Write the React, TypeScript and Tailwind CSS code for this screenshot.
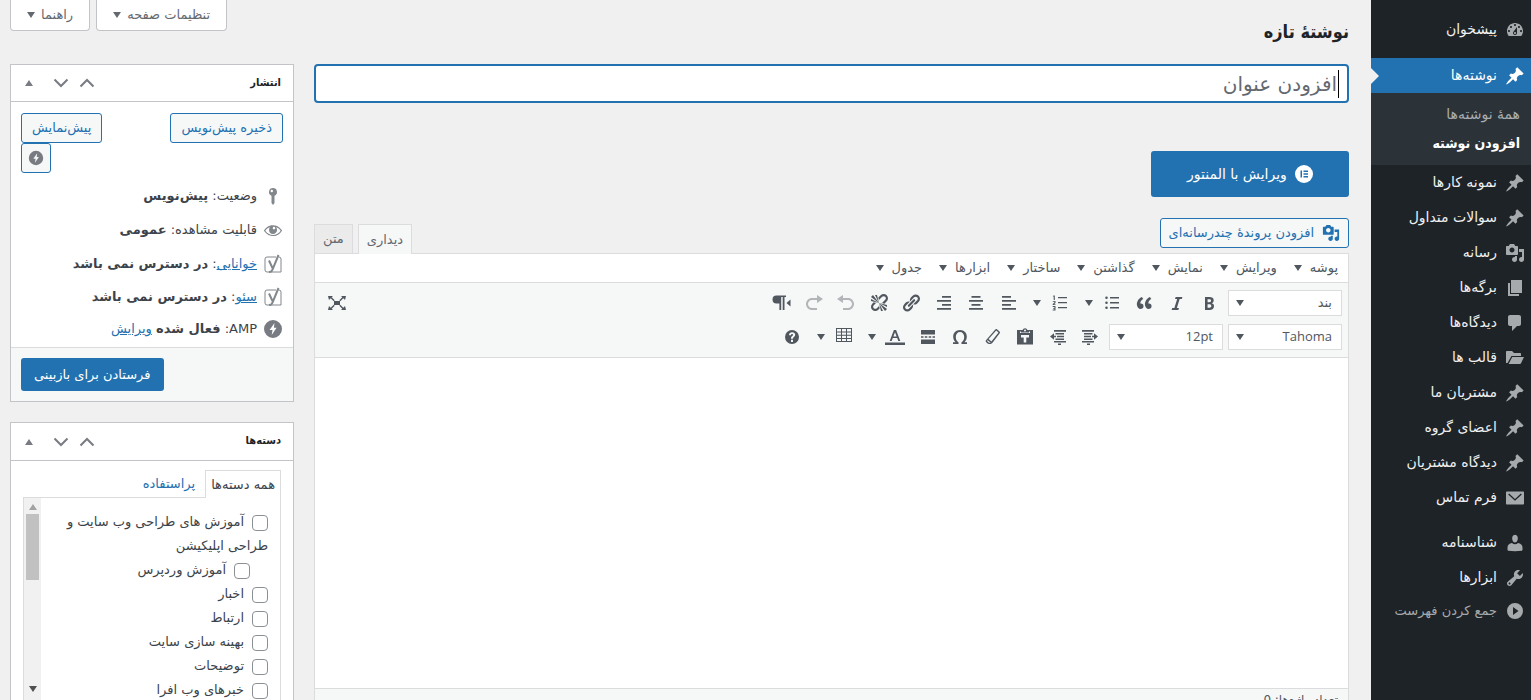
import type { ReactNode } from 'react';

const paths = {
  dashboard:
    'M3.76 16h12.48c1.1-1.37 1.76-3.11 1.76-5 0-4.42-3.58-8-8-8s-8 3.58-8 8c0 1.89.66 3.63 1.76 5zM10 4c.55 0 1 .45 1 1s-.45 1-1 1-1-.45-1-1 .45-1 1-1zM6 6c.55 0 1 .45 1 1s-.45 1-1 1-1-.45-1-1 .45-1 1-1zm8 0c.55 0 1 .45 1 1s-.45 1-1 1-1-.45-1-1 .45-1 1-1zm-5.37 5.55L12 7v6c0 1.1-.9 2-2 2s-2-.9-2-2c0-.57.24-1.08.63-1.45zM4 10c.55 0 1 .45 1 1s-.45 1-1 1-1-.45-1-1 .45-1 1-1zm12 0c.55 0 1 .45 1 1s-.45 1-1 1-1-.45-1-1 .45-1 1-1zm-5 3c0-.55-.45-1-1-1s-1 .45-1 1 .45 1 1 1 1-.45 1-1z',
  pin: 'M10.44 3.02l1.82-1.82 6.36 6.35-1.83 1.82c-1.05-.68-2.48-.57-3.41.36l-.75.75c-.92.93-1.04 2.35-.35 3.41l-1.83 1.82-2.41-2.41-2.8 2.79c-.42.42-3.38 2.71-3.8 2.29s1.86-3.39 2.28-3.81l2.79-2.79L4.1 9.36l1.83-1.82c1.05.69 2.48.57 3.4-.36l.75-.75c.93-.92 1.05-2.35.36-3.41z',
  media:
    'M13 11V4c0-.55-.45-1-1-1h-1.67L9 1H5L3.67 3H2c-.55 0-1 .45-1 1v7c0 .55.45 1 1 1h10c.55 0 1-.45 1-1zM7 4.5c1.38 0 2.5 1.12 2.5 2.5S8.38 9.5 7 9.5 4.5 8.38 4.5 7 5.62 4.5 7 4.5zM14 6h5v10.5c0 1.38-1.12 2.5-2.5 2.5S14 17.88 14 16.5s1.12-2.5 2.5-2.5c.17 0 .34.02.5.05V9h-3V6zm-4 8.05V13h2v3.5c0 1.38-1.12 2.5-2.5 2.5S7 17.88 7 16.5 8.12 14 9.5 14c.17 0 .34.02.5.05z',
  page: 'M6 2h11v13H6zM3 5h2v11h9v2H3z',
  comment:
    'M5 2h9c1.1 0 2 .9 2 2v7c0 1.1-.9 2-2 2h-2l-5 5v-5H5c-1.1 0-2-.9-2-2V4c0-1.1.9-2 2-2z',
  folder: 'M1 14V4c0-.6.4-1 1-1h5l2 2h6c.6 0 1 .4 1 1v2H6.5L2.5 15H1zM7.200 9H19l-3 6.200c-.2.5-.6.8-1 .8H3.600z',
  mail: 'M2 3.500h16c.6 0 1 .4 1 1v11c0 .6-.4 1-1 1H2c-.6 0-1-.4-1-1v-11c0-.6.4-1 1-1zm1.200 3L10 12.800l6.800-6.300-.9-.9L10 10.900 4.100 5.600z',
  user: 'M10 9.500C7.700 9.500 7.200 6 7.200 6 7 4 7.800 1.800 10 1.800S13 4 12.800 6c0 0-.5 3.500-2.800 3.500zM7 10c1.800 1.600 4.200 1.600 6 0 2.600.2 4.500 2.200 4.500 4.500v2.200c0 .5-.4 1-1 1.100-4.300.6-8.700.6-13 0-.6-.1-1-.6-1-1.100v-2.200C2.500 12.200 4.400 10.200 7 10z',
  wrench:
    'M16.68 9.77c-1.34 1.34-3.3 1.67-4.95.99l-5.41 6.52c-.99.99-2.59.99-3.58 0s-.99-2.59 0-3.57l6.52-5.42c-.68-1.65-.35-3.61.99-4.95 1.28-1.28 3.12-1.62 4.72-1.06l-2.89 2.89 2.82 2.82 2.86-2.87c.53 1.58.18 3.39-1.08 4.65zM3.81 16.21c.4.39 1.04.39 1.43 0 .4-.4.4-1.04 0-1.43-.39-.4-1.03-.4-1.43 0-.39.39-.39 1.03 0 1.43z',
  collapse: 'M10 2a8 8 0 100 16 8 8 0 000-16zM8 6l5.500 4L8 14z',
  key: 'M10 2a4 4 0 00-1.500 7.700V17l1.500 2 1.500-2V9.700A4 4 0 0010 2zm-1.200 1.800a1.200 1.200 0 110 2.400 1.200 1.200 0 010-2.400z',
  eye: 'M18.3 9.5C15 4.9 8.5 3.8 3.9 7.2c-1.2.9-2.2 2.1-3 3.4.2.4.5.8.8 1.2 3.3 4.6 9.6 5.6 14.2 2.4.9-.7 1.7-1.4 2.4-2.4.3-.4.5-.8.8-1.2-.3-.4-.5-.8-.8-1.1zm-8.2-2.3c.5-.5 1.3-.5 1.8 0s.5 1.3 0 1.8-1.3.5-1.8 0-.5-1.3 0-1.8zm-.1 7.7c-3.1 0-6-1.6-7.7-4.2C3.5 9 5.1 7.8 7 7.2c-.7.8-1 1.7-1 2.7 0 2.2 1.7 4.1 4 4.1 2.2 0 4.1-1.7 4.1-4v-.1c0-1-.4-2-1.1-2.7 1.9.6 3.5 1.8 4.7 3.5-1.7 2.6-4.6 4.2-7.7 4.2z',
  bolt: 'M10 1a9 9 0 100 18 9 9 0 000-18zM11.500 4l-.6 4.800h2.700L8.700 16l.8-5H6.600z',
  help: 'M10 3a7 7 0 100 14 7 7 0 000-14zm-1 9.700h2V15H9zM7 8.200C7 6.300 8.300 5.200 10.100 5.200S13.200 6.300 13.200 7.800c0 2.100-2.200 2.200-2.200 3.900H9c0-2.700 2.100-2.600 2.100-3.900 0-.6-.4-.9-1-.9s-1.100.5-1.100 1.300z',
  bold: 'M6 4v13h4.540c1.370 0 2.460-.33 3.260-1 .8-.66 1.200-1.580 1.200-2.770 0-.84-.17-1.510-.51-2.010s-.9-.85-1.670-1.030v-.09c.57-.1 1.020-.4 1.360-.9s.51-1.130.51-1.910c0-1.140-.39-1.980-1.170-2.500C12.750 4.260 11.500 4 9.780 4H6zm2.570 5.150V6.260h1.360c.73 0 1.270.11 1.610.32.34.22.51.58.51 1.070 0 .54-.16.92-.47 1.150s-.82.35-1.510.35h-1.500zm0 2.190h1.600c1.440 0 2.160.53 2.160 1.610 0 .6-.17 1.050-.51 1.340s-.86.43-1.570.43H8.570v-3.380z',
  italic: 'M14.78 6h-2.130l-2.800 9h2.120l-.62 2H4.600l.62-2h2.140l2.800-9H8.030l.62-2h6.750z',
  quote:
    'M9.490 13.220c0-.74-.2-1.380-.61-1.900-.62-.78-1.830-.88-2.530-.72-.29-1.650 1.110-3.750 2.920-4.650L7.880 4c-2.730 1.300-5.420 4.280-4.960 8.050C3.210 14.430 4.590 16 6.540 16c.85 0 1.560-.25 2.120-.75s.83-1.180.83-2.030zm8.050 0c0-.74-.2-1.380-.61-1.900-.63-.78-1.830-.88-2.530-.72-.29-1.650 1.110-3.750 2.920-4.650L15.930 4c-2.730 1.300-5.410 4.280-4.950 8.050.29 2.380 1.660 3.950 3.610 3.950.85 0 1.560-.25 2.120-.75s.83-1.180.83-2.030z',
  ul: 'M4.500 3.500a1.300 1.300 0 110 2.600 1.300 1.300 0 010-2.600zM4.500 8.500a1.300 1.300 0 110 2.600 1.300 1.300 0 010-2.600zM4.500 13.500a1.300 1.300 0 110 2.600 1.300 1.300 0 010-2.600zM8 4h9v1.500H8zM8 9h9v1.500H8zM8 14h9v1.500H8z',
  ol: 'M3.500 2.500h1.300V7H3.700V3.500h-.9zM2.800 8h2.700v2L4 11.200h1.500v.8H2.700v-1l1.700-1.400v-.8H2.800zM2.700 13h2.800v4.500H2.700v-.9h1.700v-.9H3.200v-.8h1.200v-1H2.700zM8 4h9v1.300H8zM8 9h9v1.300H8zM8 14h9v1.300H8z',
  alignLeft: 'M3 3h9v1.700H3zM3 7h14v1.700H3zM3 11h9v1.700H3zM3 15h14v1.700H3z',
  alignCenter: 'M5.500 3h9v1.700h-9zM3 7h14v1.700H3zM5.500 11h9v1.700h-9zM3 15h14v1.700H3z',
  alignRight: 'M8 3h9v1.700H8zM3 7h14v1.700H3zM8 11h9v1.700H8zM3 15h14v1.700H3z',
  link: 'M17.740 2.760c1.680 1.690 1.680 4.410 0 6.100l-1.530 1.520c-1.120 1.120-2.700 1.470-4.140 1.090l2.620-2.610.76-.77.76-.76c.84-.84.84-2.200 0-3.040-.84-.85-2.200-.85-3.040 0l-.77.76-3.380 3.380c-.37-1.440-.02-3.020 1.100-4.140l1.520-1.530c1.690-1.680 4.420-1.680 6.100 0zM8.590 13.430l5.340-5.340c.42-.42.42-1.100 0-1.520-.44-.43-1.130-.39-1.530 0l-5.330 5.340c-.42.42-.42 1.100 0 1.520.44.43 1.130.39 1.520 0zm-.76 2.290l4.140-4.150c.38 1.440.03 3.020-1.090 4.140l-1.520 1.530c-1.690 1.680-4.410 1.680-6.100 0-1.680-1.680-1.680-4.420 0-6.100l1.530-1.520c1.120-1.120 2.700-1.470 4.140-1.100l-4.140 4.150c-.85.84-.85 2.200 0 3.050.84.84 2.200.84 3.040 0z',
  unlink:
    'M17.740 2.260c1.680 1.690 1.680 4.410 0 6.100l-1.530 1.520c-.32.33-.69.58-1.080.77L13 10l1.690-1.640.76-.77.76-.76c.84-.84.84-2.200 0-3.040-.84-.85-2.200-.85-3.040 0l-.77.76-.76.76L10 7l-.65-2.140c.19-.38.44-.75.77-1.070l1.520-1.530c1.690-1.680 4.420-1.680 6.100 0zM2 4l8 6-6-8zm4-2l4 8-2-8H6zM2 6l8 4-8-2V6zm7.360 7.690L10 13l.74 2.350-1.380 1.390c-1.690 1.680-4.410 1.680-6.100 0-1.680-1.680-1.680-4.420 0-6.100l1.390-1.380L7 10l-.69.64-1.520 1.530c-.85.84-.85 2.200 0 3.040.84.85 2.200.85 3.040 0zM18 16l-8-6 6 8zm-4 2l-4-8 2 8h2zm4-4l-8-4 8 2v2z',
  undo: 'M12 5H7V2L1 6l6 4V7h5c2.200 0 4 1.800 4 4s-1.800 4-4 4H7v2h5c3.300 0 6-2.700 6-6s-2.700-6-6-6z',
  redo: 'M8 5h5V2l6 4-6 4V7H8c-2.200 0-4 1.800-4 4s1.800 4 4 4h5v2H8c-3.300 0-6-2.700-6-6s2.700-6 6-6z',
  rtl: 'M5.500 2.500H15V4h-1.500v13h-1.800V4h-1.500v13H8.400v-6.500H5.500a4 4 0 010-8zM19.500 6.500v7l-4-3.500z',
  indent:
    'M2 3h12v1.800H2zM4 6h8.500v1.500H4zM4 8.700h7v1.500H4zM4 11.400h8.500v1.500H4zM2 14h12v1.500H2zM7 16.500h3V18H7zM12 8.700h2V6.200l4 3.300-4 3.200v-2.500h-2z',
  outdent:
    'M6 3h12v1.800H6zM7.500 6H16v1.500H7.500zM9 8.700h7v1.500H9zM7.500 11.400H16v1.500H7.500zM6 14h12v1.500H6zM10 16.500h3V18h-3zM8 8.700H6V6.200L2 9.500l4 3.200v-2.500h2z',
  paste:
    'M12.400 3H18v14.500H2V3h5.600a2.500 2.500 0 014.800 0zM10 2.500a1 1 0 100 2 1 1 0 000-2zM5 4.500V6h10V4.500h-1V5.500H6V4.500zM6 8v2.500h2.700V15.500h2.600v-5H14V8z',
  eraser:
    'M12.300 2.600c.5-.6 1.300-.7 1.900-.2l2.300 2c.6.500.7 1.300.2 1.900l-7.200 9.500c-.5.700-1.200 1.100-2 1.100H6c-.5 0-1-.2-1.400-.5l-1.400-1.200c-.6-.5-.7-1.400-.2-2zM13.200 3.600L5.600 12.100l2.800 2.400 7.100-9.100zM4.600 13.200l-.6.800 2 1.800h1.300l.3-.4z',
  omega:
    'M11.500 15.200c2-1.300 2.700-3 2.700-5.200 0-3-1.700-5-4.200-5S5.800 7 5.800 10c0 2.200.7 3.900 2.700 5.200V17H3v-1.800h2.500C4 13.500 3.200 11.800 3.200 9.700 3.200 5.800 6 3 10 3s6.800 2.800 6.800 6.700c0 2.100-.8 3.800-2.300 5.500H17V17h-5.500z',
  pagebreak: 'M3 3h14v4.500H3zM3 9.300h2.500v1.500H3zM6.800 9.300h2.500v1.500H6.800zM10.700 9.300h2.500v1.500h-2.500zM14.500 9.300H17v1.500h-2.500zM3 12.500h14V17H3z',
  textColor: 'M8.900 3h2.200l4.200 11h-2l-1.100-3H7.800l-1.100 3h-2zm1.100 2.300L8.400 9.400h3.200zM0 15.500h20V18H0z',
  table: 'M2 1h16v14H2zM3 2v2.500h4V2zm5 0v2.500h4V2zm5 0v2.500h4V2zM3 5.500v2.300h4V5.500zm5 0v2.300h4V5.500zm5 0v2.300h4V5.500zM3 8.800V11h4V8.800zm5 0V11h4V8.800zm5 0V11h4V8.800zM3 12v2h4v-2zm5 0v2h4v-2zm5 0v2h4v-2z',
  fullscreen:
    'M7 8h6v4H7zM1 3h5L4.700 4.300l3 3-1 1-3-3L2 7zM19 3h-5l1.300 1.300-3 3 1 1 3-3L18 7zM1 17h5l-1.300-1.300 3-3-1-1-3 3L2 13zM19 17h-5l1.300-1.300-3-3 1-1 3 3L18 13z',
};

type IconName = keyof typeof paths;

const Icon = ({ name, className = 'w-5 h-5' }: { name: IconName; className?: string }) => (
  <svg viewBox="0 0 20 20" className={`shrink-0 ${className}`} fill="currentColor" fillRule="evenodd" aria-hidden="true">
    <path d={paths[name]} />
  </svg>
);

const Caret = ({ className = '' }: { className?: string }) => (
  <svg viewBox="0 0 8 6" className={`w-2 h-1.5 shrink-0 ${className}`} fill="currentColor" aria-hidden="true">
    <path d="M0 0h8L4 6z" />
  </svg>
);

const Yoast = () => (
  <svg viewBox="0 0 20 20" className="w-5 h-5 shrink-0 text-[#82878c]" fill="none" stroke="currentColor" aria-hidden="true">
    <path d="M13 3H4a2 2 0 00-2 2v11a2 2 0 002 2h14V5a2 2 0 00-2-2" />
    <path d="M6 6.500l3.500 7.500M15.500 1l-6 14.500c-.6 1.700-1.700 2.500-3.500 2.500" strokeWidth="2" />
  </svg>
);

const menu: { icon: IconName; label: string }[] = [
  { icon: 'pin', label: 'نمونه کارها' },
  { icon: 'pin', label: 'سوالات متداول' },
  { icon: 'media', label: 'رسانه' },
  { icon: 'page', label: 'برگه‌ها' },
  { icon: 'comment', label: 'دیدگاه‌ها' },
  { icon: 'folder', label: 'قالب ها' },
  { icon: 'pin', label: 'مشتریان ما' },
  { icon: 'pin', label: 'اعضای گروه' },
  { icon: 'pin', label: 'دیدگاه مشتریان' },
  { icon: 'mail', label: 'فرم تماس' },
];

const MenuItem = ({ icon, label }: { icon: IconName; label: string }) => (
  <li>
    <a href="#" className="flex items-center gap-2 h-[35px] pr-1.5 text-[#f0f0f1] hover:text-[#72aee6]">
      <Icon name={icon} className="w-5 h-5 text-[#a7aaad]" />
      {label}
    </a>
  </li>
);

const AdminMenu = () => (
  <nav className="w-40 shrink-0 bg-[#1d2327] text-[14px] pt-3">
    <ul>
      <MenuItem icon="dashboard" label="پیشخوان" />
      <li className="mt-[11px]">
        <a href="#" className="relative flex items-center gap-2 h-[35px] pr-1.5 bg-[#2271b1] text-white">
          <Icon name="pin" />
          نوشته‌ها
          <span className="absolute left-0 top-1/2 -translate-y-1/2 border-8 border-transparent border-l-[#f0f0f1] border-r-0" />
        </a>
        <ul className="bg-[#2c3338] pt-[7px] pb-[7px] pr-[11px]">
          <li className="h-[29px] flex items-center">
            <a href="#" className="text-[#a9adb0]">همهٔ نوشته‌ها</a>
          </li>
          <li className="h-[29px] flex items-center">
            <a href="#" className="text-white font-bold font-['DejaVu_Sans_Condensed','DejaVu_Sans',sans-serif]">افزودن نوشته</a>
          </li>
        </ul>
      </li>
      {menu.map((item) => (
        <MenuItem key={item.label} {...item} />
      ))}
    </ul>
    <ul className="mt-2.5">
      <MenuItem icon="user" label="شناسنامه" />
      <MenuItem icon="wrench" label="ابزارها" />
    </ul>
    <button className="flex items-center gap-2 h-8 pr-1.5 text-[13px] text-[#a7aaad]">
      <Icon name="collapse" />
      جمع کردن فهرست
    </button>
  </nav>
);

const ScreenTab = ({ children }: { children: ReactNode }) => (
  <button className="flex items-center gap-1.5 h-[31px] px-4 bg-white border border-t-0 border-[#c3c4c7] rounded-b text-[#646970] text-[13px]">
    {children}
    <Caret />
  </button>
);

const OutlineButton = ({ children, className = 'px-2.5' }: { children: ReactNode; className?: string }) => (
  <button className={`flex items-center justify-center gap-2 h-[30px] border border-[#2271b1] rounded-[3px] bg-[#f6f7f7] text-[#2271b1] text-[13px] ${className}`}>
    {children}
  </button>
);

type Tool = { icon: IconName; label: string; split?: boolean; muted?: boolean };

const rowOne: Tool[][] = [
  [
    { icon: 'bold', label: 'ضخیم' },
    { icon: 'italic', label: 'مورب' },
  ],
  [
    { icon: 'quote', label: 'نقل قول' },
    { icon: 'ul', label: 'فهرست نشانه‌دار', split: true },
  ],
  [
    { icon: 'ol', label: 'فهرست شماره‌دار', split: true },
    { icon: 'alignLeft', label: 'تراز چپ' },
  ],
  [
    { icon: 'alignCenter', label: 'وسط‌چین' },
    { icon: 'alignRight', label: 'تراز راست' },
  ],
  [
    { icon: 'link', label: 'پیوند' },
    { icon: 'unlink', label: 'حذف پیوند' },
  ],
  [
    { icon: 'undo', label: 'واگرد', muted: true },
    { icon: 'redo', label: 'ازنو', muted: true },
  ],
  [{ icon: 'rtl', label: 'راست به چپ' }],
];

const rowTwo: Tool[][] = [
  [
    { icon: 'indent', label: 'کاهش تورفتگی' },
    { icon: 'outdent', label: 'افزایش تورفتگی' },
  ],
  [
    { icon: 'paste', label: 'چسباندن متن' },
    { icon: 'eraser', label: 'پاک کردن قالب' },
  ],
  [
    { icon: 'omega', label: 'نویسه ویژه' },
    { icon: 'pagebreak', label: 'جداکننده' },
  ],
  [
    { icon: 'textColor', label: 'رنگ متن', split: true },
    { icon: 'table', label: 'جدول', split: true },
  ],
  [{ icon: 'help', label: 'کمک' }],
];

const Tools = ({ groups }: { groups: Tool[][] }) => (
  <div className="flex gap-px mr-[3px]">
    {groups.map((group) => (
      <div key={group[0].icon} className="flex">
        {group.map((tool) => (
          <div key={tool.icon} className="flex">
            <button aria-label={tool.label} className={`w-8 h-[26px] flex items-center justify-center ${tool.muted ? 'opacity-40' : ''}`}>
              <Icon name={tool.icon} />
            </button>
            {tool.split && (
              <button aria-label={`گزینه‌های ${tool.label}`} className="w-[19px] pr-0 pl-1 flex items-center justify-center">
                <Caret />
              </button>
            )}
          </div>
        ))}
      </div>
    ))}
  </div>
);

const ToolSelect = ({ label, value }: { label: string; value: string }) => (
  <div className="relative w-[114px]">
    <select
      aria-label={label}
      className="appearance-none w-full h-[26px] pr-[9px] bg-white border border-[#dcdcde] text-[13px] text-[#50575e] font-['Open_Sans','DejaVu_Sans',sans-serif]"
    >
      <option>{value}</option>
    </select>
    <Caret className="absolute left-2 top-2.5 pointer-events-none" />
  </div>
);

const Editor = () => (
  <div>
    <div className="flex justify-between items-end">
      <OutlineButton className="px-2 mb-[5px]">
        <Icon name="media" className="w-[18px] h-[18px]" />
        افزودن پروندهٔ چندرسانه‌ای
      </OutlineButton>
      <div className="flex gap-[5px] text-[13px] text-[#646970]">
        <button className="relative h-[30px] -mb-px px-2 bg-[#f6f7f7] border border-b-0 border-[#dcdcde]">دیداری</button>
        <button className="h-[29px] self-end px-2 bg-[#ebebeb] border border-b-0 border-[#dcdcde]">متن</button>
      </div>
    </div>
    <div className="border border-[#dcdcde] bg-white text-[#50575e]">
      <div className="flex gap-[17px] h-[29px] pr-2.5 border-b border-[#dcdcde] text-[13px]">
        {['پوشه', 'ویرایش', 'نمایش', 'گذاشتن', 'ساختار', 'ابزارها', 'جدول'].map((item) => (
          <button key={item} className="flex items-center gap-2">
            {item}
            <Caret />
          </button>
        ))}
      </div>
      <div className="bg-[#f6f7f7] border-b border-[#dcdcde] px-1.5 py-[7px] flex flex-col gap-2">
        <div className="flex">
          <ToolSelect label="قالب" value="بند" />
          <Tools groups={rowOne} />
          <button aria-label="تمام صفحه" className="w-8 h-[26px] mr-auto flex items-center justify-center">
            <Icon name="fullscreen" />
          </button>
        </div>
        <div className="flex">
          <div className="flex gap-[5px]">
            <ToolSelect label="قلم" value="Tahoma" />
            <ToolSelect label="اندازه قلم" value="12pt" />
          </div>
          <Tools groups={rowTwo} />
        </div>
      </div>
      <div className="min-h-[330px]" contentEditable suppressContentEditableWarning aria-label="متن نوشته" />
      <div className="border-t border-[#dcdcde] bg-[#f6f7f7] px-2.5 py-0.5 text-[12px]">تعداد واژه‌ها: 0</div>
    </div>
  </div>
);

const Chevron = ({ d }: { d: string }) => (
  <svg viewBox="0 0 16 10" className="w-4 h-2.5" fill="none" stroke="currentColor" strokeWidth="2" aria-hidden="true">
    <path d={d} />
  </svg>
);

const BoxHeader = ({ title, className }: { title: string; className: string }) => (
  <div className={`flex items-center pr-3 pl-3.5 border-b border-[#c3c4c7] ${className}`}>
    <h2 className="text-[11px] font-bold text-[#1d2327] font-['DejaVu_Sans_Condensed','DejaVu_Sans',sans-serif]">{title}</h2>
    <div className="flex items-center mr-auto text-[#787c82]">
      <button aria-label="انتقال به بالا">
        <Chevron d="M1.500 8.500L8 2l6.500 6.500" />
      </button>
      <button aria-label="انتقال به پایین" className="mr-2.5">
        <Chevron d="M1.500 1.500L8 8l6.500-6.500" />
      </button>
      <button aria-label="باز و بسته کردن" className="mr-5">
        <Caret className="rotate-180" />
      </button>
    </div>
  </div>
);

const PublishBox = () => (
  <section className="bg-white border border-[#c3c4c7] text-[13px] text-[#3c434a]">
    <BoxHeader title="انتشار" className="h-[37px]" />
    <div className="flex justify-between items-start px-2.5 pt-[11px]">
      <OutlineButton>ذخیره پیش‌نویس</OutlineButton>
      <div className="flex flex-col items-end">
        <OutlineButton>پیش‌نمایش</OutlineButton>
        <OutlineButton className="w-[30px]">
          <Icon name="bolt" className="w-4 h-4 text-[#787c82]" />
        </OutlineButton>
      </div>
    </div>
    <ul className="pr-2.5 pt-1.5 pb-0.5">
      <li className="flex items-center gap-1.5 h-[34px]">
        <Icon name="key" className="w-5 h-5 text-[#82878c]" />
        <span>وضعیت: <b>پیش‌نویس</b></span>
      </li>
      <li className="flex items-center gap-1.5 h-[34px]">
        <Icon name="eye" className="w-5 h-5 text-[#82878c]" />
        <span>قابلیت مشاهده: <b>عمومی</b></span>
      </li>
      <li className="flex items-center gap-1.5 h-[34px]">
        <Yoast />
        <span><a href="#" className="text-[#2271b1] underline">خوانایی</a>: <b>در دسترس نمی باشد</b></span>
      </li>
      <li className="flex items-center gap-1.5 h-8">
        <Yoast />
        <span><a href="#" className="text-[#2271b1] underline">سئو</a>: <b>در دسترس نمی باشد</b></span>
      </li>
      <li className="flex items-center gap-1.5 h-8">
        <Icon name="bolt" className="w-5 h-5 text-[#787c82]" />
        <span>AMP: <b>فعال شده</b> <a href="#" className="text-[#2271b1] underline">ویرایش</a></span>
      </li>
    </ul>
    <div className="flex justify-end px-2.5 py-2.5 bg-[#f6f7f7] border-t border-[#dcdcde]">
      <button className="h-[33px] px-[13px] rounded-[3px] bg-[#2271b1] text-white">فرستادن برای بازبینی</button>
    </div>
  </section>
);

const categories = [
  { label: 'آموزش های طراحی وب سایت و طراحی اپلیکیشن' },
  { label: 'آموزش وردپرس', child: true },
  { label: 'اخبار' },
  { label: 'ارتباط' },
  { label: 'بهینه سازی سایت' },
  { label: 'توضیحات' },
  { label: 'خبرهای وب افرا' },
];

const CategoryBox = () => (
  <section className="bg-white border border-[#c3c4c7] text-[13px] text-[#3c434a]">
    <BoxHeader title="دسته‌ها" className="h-[38px]" />
    <div className="px-3 pt-[9px]">
      <div className="flex">
        <button className="relative h-7 -mb-px px-[5px] bg-white border border-b-0 border-[#dcdcde]">همه دسته‌ها</button>
        <button className="px-2.5 text-[#2271b1]">پراستفاده</button>
      </div>
      <div className="flex border border-[#dcdcde]">
        <ul className="flex-1 pr-3 pl-2.5 pt-3">
          {categories.map(({ label, child }) => (
            <li key={label} className={child ? 'pr-[18px]' : ''}>
              <label className="block leading-6">
                <input
                  type="checkbox"
                  className="appearance-none w-4 h-4 ml-2 align-middle border border-[#8c8f94] rounded bg-white checked:bg-[#2271b1]"
                />
                {label}
              </label>
            </li>
          ))}
        </ul>
        <div className="w-[17px] flex flex-col items-center bg-[#f1f1f1] pt-1.5">
          <Caret className="rotate-180 text-[#a3a3a3]" />
          <div className="w-[13px] h-[66px] mt-1 bg-[#c1c1c1]" />
          <Caret className="mt-auto mb-2.5 text-[#505050]" />
        </div>
      </div>
    </div>
  </section>
);

const App = () => {
  return (
    <div dir="rtl" className="flex h-screen overflow-hidden bg-[#f0f0f1] font-['DejaVu_Sans',sans-serif]">
      <AdminMenu />
      <div className="flex-1 min-w-0 pr-[22px] pl-2.5">
        <header className="flex justify-between items-start h-16">
          <h1 className="pt-4 text-[18px] leading-8 font-bold text-[#1d2327] font-['DejaVu_Sans_Condensed','DejaVu_Sans',sans-serif]">
            نوشتهٔ تازه
          </h1>
          <div className="flex gap-1.5">
            <ScreenTab>تنظیمات صفحه</ScreenTab>
            <ScreenTab>راهنما</ScreenTab>
          </div>
        </header>
        <div className="flex items-start gap-5">
          <main className="flex-1 min-w-0">
            <div className="relative">
              <input
                type="text"
                aria-label="افزودن عنوان"
                placeholder="افزودن عنوان"
                className="w-full h-[39px] px-2.5 bg-white border-2 border-[#2271b1] rounded text-[20px] outline-none placeholder:text-[#646970]"
              />
              <span className="absolute right-2.5 top-1.5 w-px h-7 bg-black" />
            </div>
            <button className="flex items-center justify-center gap-2 w-[198px] h-[46px] mt-12 mb-[21px] rounded-[3px] bg-[#2271b1] text-white text-[14px]">
              <svg viewBox="0 0 18 18" className="w-[18px] h-[18px]" aria-hidden="true">
                <circle cx="9" cy="9" r="9" fill="#fff" />
                <path d="M5.500 5.500h1.500v7H5.500zM8.500 5.500h4.500V7H8.500zM8.500 8.300h4.500v1.400H8.500zM8.500 11h4.500v1.500H8.500z" fill="#2271b1" />
              </svg>
              ویرایش با المنتور
            </button>
            <Editor />
          </main>
          <aside className="w-[284px] shrink-0 flex flex-col gap-5">
            <PublishBox />
            <CategoryBox />
          </aside>
        </div>
      </div>
    </div>
  );
};

export default App;
